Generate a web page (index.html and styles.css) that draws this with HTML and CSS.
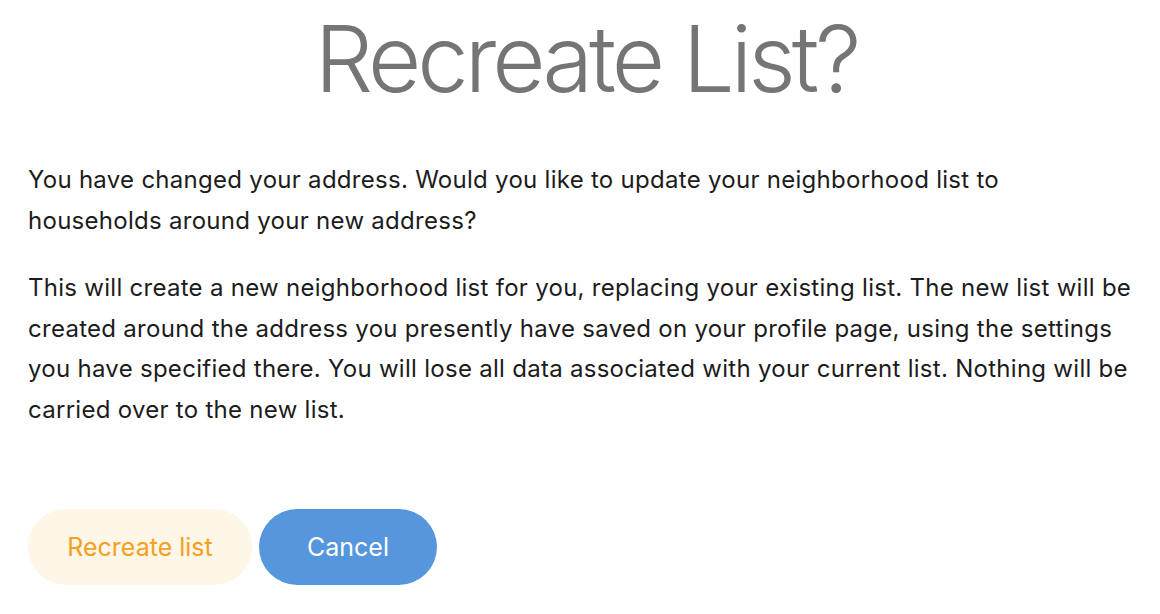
FILE: index.html
```
<!DOCTYPE html>
<html>
<head>
<meta charset="utf-8">
<link rel="stylesheet" href="styles.css">
</head>
<body>
<div class="dialog">
  <h1 class="title">Recreate List?</h1>
  <div class="content">
    <p>You have changed your address. Would you like to update your neighborhood list to households around your new address?</p>
    <p>This will create a new neighborhood list for you, replacing your existing list. The new list will be created around the address you presently have saved on your profile page, using the settings you have specified there. You will lose all data associated with your current list. Nothing will be carried over to the new list.</p>
  </div>
  <div class="actions">
    <button class="btn btn-recreate">Recreate list</button>
    <button class="btn btn-cancel">Cancel</button>
  </div>
</div>
</body>
</html>
```
FILE: styles.css
```
html, body {
  margin: 0;
  padding: 0;
  background: #ffffff;
}
.dialog {
  padding: 0 16px 0 28px;
  font-family: "Inter", "Liberation Sans", sans-serif;
}
.title {
  margin: 0;
  padding-top: 6px;
  text-align: center;
  font-size: 92px;
  font-weight: 300;
  color: #757575;
  line-height: 106px;
  letter-spacing: -4px;
}
.content {
  margin-top: 48px;
  padding-right: 6px;
  color: #1c1c1c;
  font-size: 24px;
  line-height: 40.5px;
  letter-spacing: 0.28px;
}
.content p {
  margin: 0 0 27px 0;
}
.actions {
  margin-top: 79px;
  display: flex;
  gap: 7px;
}
.btn {
  height: 76px;
  border: none;
  border-radius: 38px;
  font-family: "Inter", "Liberation Sans", sans-serif;
  font-size: 25px;
  font-weight: 400;
}
.btn-recreate {
  width: 224px;
  background: #fef6e6;
  color: #f5a020;
}
.btn-cancel {
  width: 178px;
  background: #5596dc;
  color: #ffffff;
}
```
